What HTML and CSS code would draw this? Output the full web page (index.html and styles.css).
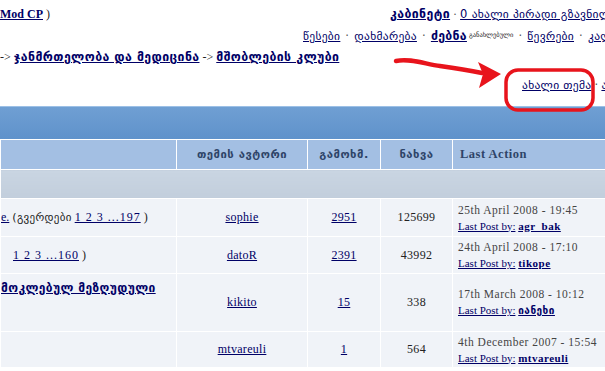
FILE: index.html
```html
<!DOCTYPE html>
<html lang="ka">
<head>
    <meta charset="UTF-8">
    <meta name="viewport" content="width=device-width, initial-scale=1.0">
    <title>მშობლების კლუბი</title>
    <link rel="stylesheet" href="styles.css">
</head>
<body>
    <div class="page">
        <div class="userbar">
            <div class="userbar-left"><a href="#" class="strong">Mod CP</a> )</div>
            <div class="userbar-right">
                <a href="#" class="strong ka">კაბინეტი</a><span class="sep narrow">·</span><a href="#" class="ka">0 ახალი პირადი გზავნილი</a>
            </div>
        </div>
        <div class="menu ka">
            <a href="#">წესები</a><span class="sep">·</span><a href="#">დახმარება</a><span class="sep">·</span><a href="#" class="strong">ძებნა</a><sup class="tiny">განახლებული</sup><span class="sep">·</span><a href="#">წევრები</a><span class="sep">·</span><a href="#">კალენდარი</a>
        </div>
        <div class="crumbs">
            -&gt; <a href="#" class="strong ka">ჯანმრთელობა და მედიცინა</a> -&gt; <a href="#" class="strong ka">მშობლების კლუბი</a>
        </div>
        <div class="actions ka">
            <a href="#">ახალი თემა</a><span class="sep narrow">·</span><a href="#">ახალი</a>
        </div>

        <div class="maintitle"></div>

        <table class="topics">
            <colgroup>
                <col class="c-title">
                <col class="c-author">
                <col class="c-replies">
                <col class="c-views">
                <col class="c-last">
            </colgroup>
            <tr class="head">
                <th></th>
                <th class="ka">თემის ავტორი</th>
                <th class="ka">გამოხმ.</th>
                <th class="ka">ნახვა</th>
                <th class="left">Last Action</th>
            </tr>
            <tr class="sub">
                <td colspan="5"></td>
            </tr>
            <tr class="r1">
                <td class="title"><a href="#">e.</a> <span class="ka">(გვერდები</span> <a href="#" class="pages">1 2 3 ...197</a> )</td>
                <td class="mid"><a href="#">sophie</a></td>
                <td class="mid"><a href="#">2951</a></td>
                <td class="mid">125699</td>
                <td class="last"><span class="date">25th April 2008 - 19:45</span><br><a href="#">Last Post by:</a> <a href="#" class="strong">agr_bak</a></td>
            </tr>
            <tr class="r2">
                <td class="title pad"><a href="#" class="pages">1 2 3 ...160</a> )</td>
                <td class="mid"><a href="#">datoR</a></td>
                <td class="mid"><a href="#">2391</a></td>
                <td class="mid">43992</td>
                <td class="last"><span class="date">24th April 2008 - 17:10</span><br><a href="#">Last Post by:</a> <a href="#" class="strong">tikope</a></td>
            </tr>
            <tr class="r3">
                <td class="title top"><a href="#" class="strong ka">მოკლებულ მეზღუდული</a></td>
                <td class="mid"><a href="#">kikito</a></td>
                <td class="mid"><a href="#">15</a></td>
                <td class="mid">338</td>
                <td class="last"><span class="date">17th March 2008 - 10:12</span><br><a href="#">Last Post by:</a> <a href="#" class="strong ka">იანეხი</a></td>
            </tr>
            <tr class="r4">
                <td class="title"></td>
                <td class="mid"><a href="#">mtvareuli</a></td>
                <td class="mid"><a href="#">1</a></td>
                <td class="mid">564</td>
                <td class="last"><span class="date">4th December 2007 - 15:54</span><br><a href="#">Last Post by:</a> <a href="#" class="strong">mtvareuli</a></td>
            </tr>
        </table>
    </div>

    <svg class="markup" width="605" height="371" viewBox="0 0 605 371">
        <path d="M396 61 C410 58 425 64 440 66 C455 68 468 70 482 73" fill="none" stroke="#e8141c" stroke-width="4.5" stroke-linecap="round"/>
        <path d="M478 62 L501 74 L479 88 L483 74 Z" fill="#e8141c"/>
        <rect x="506" y="70" width="87" height="40" rx="12" fill="none" stroke="#e8141c" stroke-width="3.5"/>
    </svg>
</body>
</html>
```

FILE: styles.css
```css
body {
    margin: 0;
    background: #fff;
    font-family: "Liberation Serif", "DejaVu Sans", serif;
    font-size: 12px;
    color: #222;
    overflow: hidden;
}
a {
    color: #000066;
}
.strong {
    font-weight: bold;
}
.ka {
    font-family: "DejaVu Sans", sans-serif;
    font-size: 11.5px;
    letter-spacing: 0.3px;
}
.strong.ka {
    font-size: 12.3px;
    letter-spacing: 0.4px;
}
.sep {
    margin: 0 5px;
    color: #555;
}
.sep.narrow {
    margin: 0 3px;
}
.page {
    width: 605px;
    height: 371px;
    overflow: hidden;
    white-space: nowrap;
    position: relative;
}
.userbar {
    display: flex;
    height: 22px;
    align-items: center;
    padding-top: 3px;
}
.userbar-left {
    width: 390px;
    flex-shrink: 0;
}
.userbar-right {
    flex-shrink: 0;
}
.menu {
    padding-left: 303px;
    height: 20px;
    line-height: 20px;
}
.menu .strong {
    font-size: 12.3px;
}
.tiny {
    font-size: 6.5px;
    letter-spacing: 0;
    vertical-align: 3px;
    margin-left: 2px;
}
.crumbs {
    height: 24px;
    line-height: 24px;
}
.actions {
    padding-left: 522px;
    height: 37px;
    line-height: 32px;
}
.maintitle {
    height: 32px;
    border-top: 1px solid #9cc0e6;
    background: linear-gradient(#6f9fd3, #5f92cb);
}
.topics {
    border-collapse: collapse;
    table-layout: fixed;
    width: 684px;
    border-top: 1px solid #fff;
}
.c-title { width: 176px; }
.c-author { width: 131px; }
.c-replies { width: 73px; }
.c-views { width: 72px; }
.c-last { width: 232px; }
.topics td, .topics th {
    border: 1px solid #fff;
    padding: 0;
    overflow: hidden;
}
.head th {
    height: 29px;
    background: #a3bfe3;
    color: #2e4468;
    font-weight: bold;
    letter-spacing: 0.5px;
}
.head th.ka {
    font-size: 11.3px;
}
.head th.left {
    text-align: left;
    padding-left: 7px;
    font-size: 12.5px;
}
.topics td {
    background: #f0f3f8;
    height: 35px;
}
.topics .sub td {
    height: 28px;
    background: linear-gradient(#c9d5e2, #c2cedc);
}
.topics .r1 td {
    height: 37px;
}
.topics .r2 td {
    height: 36px;
}
.topics .r3 td {
    height: 57px;
}
.topics .r3 td.title {
    height: 50px;
}
.title {
    text-align: left;
}
.title .ka {
    font-size: 11px;
}
.title .strong.ka {
    font-size: 12px;
}
.title .pages {
    letter-spacing: 1px;
}
.title.pad {
    padding-left: 12px !important;
}
.title.top {
    vertical-align: top;
    padding-top: 7px !important;
}
.mid {
    text-align: center;
    letter-spacing: 0.3px;
}
.last {
    padding-left: 5px !important;
    line-height: 16px;
    font-size: 11px;
    color: #444;
}
.last .date {
    font-size: 11.5px;
    letter-spacing: 0.5px;
}
.last .strong {
    letter-spacing: 0.5px;
}
.last .strong.ka {
    font-size: 10px;
}
.markup {
    position: absolute;
    left: 0;
    top: 0;
    pointer-events: none;
}
```
